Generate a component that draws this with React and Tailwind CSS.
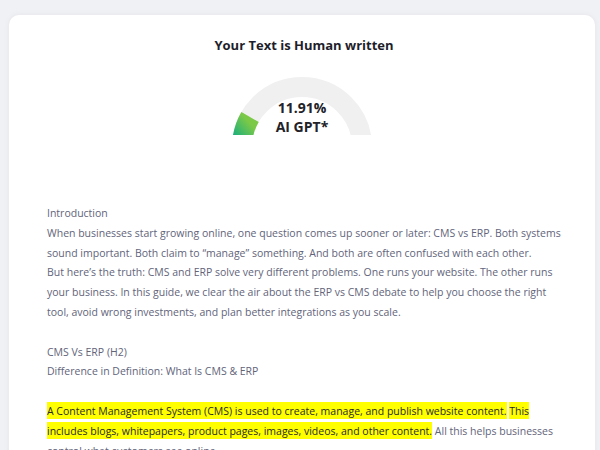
import React from "react";

function Gauge() {
  return (
    <div className="relative mx-auto mt-[22px] h-[58px] w-[140px]">
      <svg width="140" height="58" viewBox="0 0 140 58" className="block">
        <defs>
          <linearGradient id="g" x1="0" y1="1" x2="0.3" y2="0">
            <stop offset="0%" stopColor="#14ad80" />
            <stop offset="100%" stopColor="#7cc947" />
          </linearGradient>
        </defs>
        <path d="M10 70 A60 60 0 0 1 130 70" fill="none" stroke="#f0f0f0" strokeWidth="20" />
        <path d="M10 70 A60 60 0 0 1 18.04 40" fill="none" stroke="url(#g)" strokeWidth="20" />
      </svg>
      <div className="absolute inset-x-0 top-[21px] text-center text-[14px] font-bold leading-[19px] text-[#222228]">
        <div>11.91%</div>
        <div>AI GPT*</div>
      </div>
    </div>
  );
}

export default function App() {
  const hl = "bg-[#ffff00] text-[#2a2a2a] py-[1.5px]";
  return (
    <div
      className="h-[450px] w-[600px] overflow-hidden bg-[#f0f1f5] pl-[9px] pr-[5px] pt-[15px]"
      style={{ fontFamily: '"Open Sans", "Noto Sans", sans-serif' }}
    >
      <div className="h-[600px] rounded-[10px] bg-white pt-[20px] shadow-[0_0_6px_rgba(0,0,0,0.05)] ring-1 ring-[#ececf0]">
        <h1 className="pl-[4px] text-center text-[13px] font-bold leading-[20px] text-[#1e1e2b]">
          Your Text is Human written
        </h1>
        <Gauge />
        <div className="mt-[69px] pl-[38px] pr-[30px] text-[10.5px] leading-[19.8px] text-[#62647a]">
          <p>Introduction</p>
          <p>
            When businesses start growing online, one question comes up sooner or later: CMS vs ERP. Both systems
            sound important. Both claim to “manage” something. And both are often confused with each other.
          </p>
          <p>
            But here’s the truth: CMS and ERP solve very different problems. One runs your website. The other runs
            your business. In this guide, we clear the air about the ERP vs CMS debate to help you choose the right
            tool, avoid wrong investments, and plan better integrations as you scale.
          </p>
          <p className="mt-[19.8px]">CMS Vs ERP (H2)</p>
          <p>Difference in Definition: What Is CMS &amp; ERP</p>
          <p className="mt-[19.8px]">
            <span className={hl}>
              A Content Management System (CMS) is used to create, manage, and publish website content.
            </span>{" "}
            <span className={hl}>
              This includes blogs, whitepapers, product pages, images, videos, and other content.
            </span>{" "}
            All this helps businesses control what customers see online.
          </p>
        </div>
      </div>
    </div>
  );
}
